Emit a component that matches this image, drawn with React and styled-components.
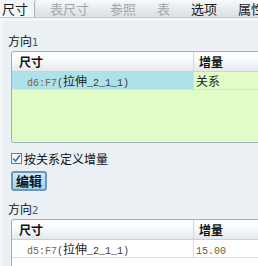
import styled, { createGlobalStyle } from "styled-components";

const GlobalStyle = createGlobalStyle`
  html, body {
    margin: 0;
    padding: 0;
    width: 258px;
    height: 266px;
    overflow: hidden;
    background: #f4f7f9;
    font-family: "Noto Sans CJK SC", "DejaVu Sans", sans-serif;
    font-size: 12px;
    color: #111;
  }
`;

const tabs = [
  { label: "尺寸", active: true },
  { label: "表尺寸", disabled: true },
  { label: "参照", disabled: true },
  { label: "表", disabled: true },
  { label: "选项" },
  { label: "属性" },
];

const DimName = ({ id }) => (
  <>
    <Mono $tone="#7a6633">{id}</Mono>
    <Mono>(</Mono>拉伸<Mono>_2_1_1)</Mono>
  </>
);

const App = () => {
  return (
    <>
      <GlobalStyle />
      <Page>
        <TabBar>
          {tabs.map((tab) => (
            <Tab key={tab.label} $active={tab.active} $disabled={tab.disabled}>
              {tab.label}
            </Tab>
          ))}
        </TabBar>
        <Panel>
          <GroupLabel $top={8}>
            方向<Num>1</Num>
          </GroupLabel>
          <Table $height={92}>
            <HeaderRow>
              <HeadCell $first>尺寸</HeadCell>
              <HeadCell>增量</HeadCell>
            </HeaderRow>
            <Row $fill="#e1fcc6">
              <Cell $first $bg="#ade2e8">
                <DimName id="d6:F7" />
              </Cell>
              <Cell>关系</Cell>
            </Row>
          </Table>
          <CheckRow>
            <CheckBox>
              <svg width="9" height="9" viewBox="0 0 9 9">
                <path d="M1 4.5 L3.5 7 L8 1.2" stroke="#2f6fa6" strokeWidth="1.6" fill="none" />
              </svg>
            </CheckBox>
            按关系定义增量
          </CheckRow>
          <EditButton>编辑</EditButton>
          <GroupLabel $top={10}>
            方向<Num>2</Num>
          </GroupLabel>
          <Table $height={60}>
            <HeaderRow>
              <HeadCell $first>尺寸</HeadCell>
              <HeadCell>增量</HeadCell>
            </HeaderRow>
            <Row>
              <Cell $first>
                <DimName id="d5:F7" />
              </Cell>
              <Cell>
                <Mono $tone="#6a5a30">15.00</Mono>
              </Cell>
            </Row>
          </Table>
        </Panel>
      </Page>
    </>
  );
};

const Page = styled.div`
  width: 258px;
  height: 266px;
  display: flex;
  flex-direction: column;
  overflow: hidden;
`;

const TabBar = styled.div`
  display: flex;
  flex: none;
  height: 17px;
  overflow: hidden;
  background: linear-gradient(#f7f9fa, #d9dfe3);
  border-bottom: 1px solid #bccad3;
`;

const Tab = styled.div`
  flex: none;
  height: 17px;
  line-height: 17px;
  font-size: 13px;
  padding: 0 10px 0 11px;
  white-space: nowrap;
  color: ${(p) => (p.$disabled ? "#a2a6aa" : "#1a1a1a")};
  background: ${(p) => (p.$active ? "#f1f6f8" : "transparent")};
  &:first-child {
    width: 34px;
    box-sizing: border-box;
    padding: 0 0 0 2px;
  }
  &:nth-child(2) {
    border-left: 1px solid #a2b2bd;
    border-top-left-radius: 3px;
    padding-left: 15px;
  }
`;

const Panel = styled.div`
  flex: 1;
  min-height: 0;
  margin: 3px 0 0 2px;
  padding: 4px 0 0 9px;
  background: #eaf0f4;
  border-top-left-radius: 4px;
  display: flex;
  flex-direction: column;
  overflow: hidden;
`;

const GroupLabel = styled.div`
  flex: none;
  margin-left: -3px;
  margin-top: ${(p) => p.$top}px;
  height: 16px;
  line-height: 16px;
`;

const Num = styled.span`
  font-family: "DejaVu Sans", sans-serif;
  font-size: 10px;
  color: #2d5f8c;
`;

const Table = styled.div`
  flex: none;
  margin-top: 2px;
  height: ${(p) => p.$height}px;
  box-sizing: border-box;
  border: 1px solid #a4b0b8;
  border-right: none;
  border-radius: 3px 0 0 3px;
  background: #ffffff;
  display: flex;
  flex-direction: column;
  overflow: hidden;
`;

const HeaderRow = styled.div`
  display: flex;
  flex: none;
  height: 19px;
  background: linear-gradient(#ffffff, #f4f7f9 55%, #e3e8ec);
  border-bottom: 1px solid #c6d1d8;
`;

const HeadCell = styled.div`
  width: ${(p) => (p.$first ? "182px" : "auto")};
  flex: ${(p) => (p.$first ? "none" : "1")};
  padding-left: ${(p) => (p.$first ? "7px" : "5px")};
  box-sizing: border-box;
  font-weight: bold;
  line-height: 19px;
  border-right: ${(p) => (p.$first ? "1px solid #d0d9df" : "none")};
`;

const Row = styled.div`
  display: flex;
  flex: ${(p) => (p.$fill ? "1" : "none")};
  height: 18px;
  align-items: flex-start;
  background: ${(p) => p.$fill || "transparent"};
`;

const Cell = styled.div`
  width: ${(p) => (p.$first ? "182px" : "auto")};
  flex: ${(p) => (p.$first ? "none" : "1")};
  height: 18px;
  line-height: 17px;
  padding-left: ${(p) => (p.$first ? "15px" : "2px")};
  box-sizing: border-box;
  background: ${(p) => p.$bg || "transparent"};
  border-right: ${(p) => (p.$first ? "1px solid #d3dce2" : "none")};
  border-bottom: 1px solid #d6e0e6;
  color: #222;
  white-space: nowrap;
`;

const Mono = styled.span`
  font-family: "Liberation Mono", monospace;
  font-size: 10px;
  color: ${(p) => p.$tone || "#3a3a3a"};
`;

const CheckRow = styled.div`
  flex: none;
  display: flex;
  align-items: center;
  gap: 2px;
  margin-top: 7px;
  height: 16px;
`;

const CheckBox = styled.span`
  width: 11px;
  height: 11px;
  box-sizing: border-box;
  border: 1px solid #5d7f9b;
  background: #f8fbfd;
  display: flex;
  align-items: center;
  justify-content: center;
`;

const EditButton = styled.button`
  flex: none;
  align-self: flex-start;
  margin-top: 5px;
  width: 36px;
  height: 20px;
  padding: 0;
  border: 2px solid #6e98b6;
  border-radius: 3px;
  background: linear-gradient(#cbe9fb, #9fd2f1);
  font-family: "Noto Sans CJK SC", sans-serif;
  font-size: 13px;
  font-weight: bold;
  line-height: 16px;
  color: #111;
`;

export default App;
